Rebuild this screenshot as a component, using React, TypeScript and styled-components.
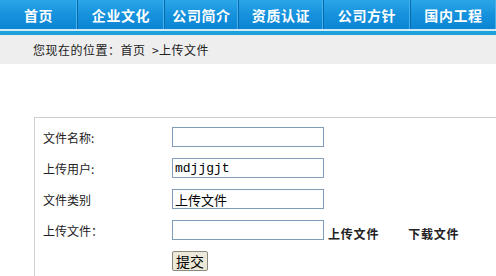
import React from "react";
import styled, { createGlobalStyle } from "styled-components";

const Global = createGlobalStyle`
  html, body { margin: 0; padding: 0; background: #ffffff; }
  body { font-family: "Noto Sans CJK SC", "DejaVu Sans", sans-serif; font-size: 12px; color: #222; }
`;

const Page = styled.div`
  width: 496px;
  height: 276px;
  overflow: hidden;
  display: flex;
  flex-direction: column;
`;

const Nav = styled.nav`
  height: 29px;
  display: flex;
  background: linear-gradient(#2aa6e8, #1490dc 55%, #0b85d3);
`;

const NavItem = styled.a<{ $w: number }>`
  width: ${(p) => p.$w}px;
  flex: none;
  display: flex;
  align-items: center;
  justify-content: center;
  color: #ffffff;
  font-weight: bold;
  font-size: 14px;
  text-decoration: none;
  border-right: 1px solid #0a68ad;
  box-shadow: inset -1px 0 0 #43b3ee;
  letter-spacing: 0.6px;
`;

const NavGap = styled.div`
  height: 2px;
  background: #cfeaf7;
`;

const NavBand = styled.div`
  height: 4px;
  background: #1ea2dc;
`;

const Crumb = styled.div`
  height: 29px;
  background: #eeeeee;
  display: flex;
  align-items: center;
  padding-left: 33px;
  font-size: 12px;
  letter-spacing: 0.5px;
  color: #222;
  white-space: pre;
`;

const FormBox = styled.div`
  margin-top: 53px;
  margin-left: 34px;
  border-top: 1px solid #cfcfcf;
  border-left: 1px solid #cfcfcf;
  flex: 1;
  padding-top: 9px;
  display: flex;
  flex-direction: column;
  gap: 11px;
`;

const Row = styled.div`
  display: flex;
  align-items: center;
  height: 20px;
`;

const Label = styled.div`
  width: 129px;
  flex: none;
  padding-left: 8px;
  font-size: 12px;
  color: #222;
`;

const Field = styled.div<{ $mono?: boolean; $size?: number }>`
  width: 148px;
  flex: none;
  height: 18px;
  border: 1px solid #7f9db9;
  background: #fff;
  display: flex;
  align-items: center;
  padding-left: 2px;
  box-sizing: content-box;
  font-family: ${(p) => (p.$mono ? '"Liberation Mono", "DejaVu Sans Mono", monospace' : '"Noto Sans CJK SC", sans-serif')};
  font-size: ${(p) => p.$size ?? 12}px;
  color: #000;
`;

const Link = styled.span<{ $ml: number }>`
  margin-left: ${(p) => p.$ml}px;
  font-weight: bold;
  font-size: 12px;
  letter-spacing: 0.8px;
  color: #222;
  margin-top: 6px;
`;

const Button = styled.button`
  margin-left: 137px;
  width: 36px;
  height: 20px;
  padding: 0;
  background: #ece9d8;
  border: 1px solid #8c8a80;
  font-family: "Noto Sans CJK SC", sans-serif;
  font-size: 14px;
  line-height: 18px;
  color: #000;
  border-radius: 2px;
`;

const items: [string, number][] = [
  ["首页", 77],
  ["企业文化", 86],
  ["公司简介", 73],
  ["资质认证", 84],
  ["公司方针", 86],
  ["国内工程", 85],
];

export default function App() {
  return (
    <Page>
      <Global />
      <Nav>
        {items.map(([t, w]) => (
          <NavItem key={t} $w={w} href="#">
            {t}
          </NavItem>
        ))}
      </Nav>
      <NavGap />
      <NavBand />
      <Crumb>{"您现在的位置：首页  >上传文件"}</Crumb>
      <FormBox>
        <Row>
          <Label>文件名称:</Label>
          <Field />
        </Row>
        <Row>
          <Label>上传用户:</Label>
          <Field $mono $size={13}>mdjjgjt</Field>
        </Row>
        <Row>
          <Label>文件类别</Label>
          <Field $size={13}>上传文件</Field>
        </Row>
        <Row>
          <Label>上传文件：</Label>
          <Field />
          <Link $ml={4}>上传文件</Link>
          <Link $ml={29}>下载文件</Link>
        </Row>
        <Row>
          <Button>提交</Button>
        </Row>
      </FormBox>
    </Page>
  );
}
